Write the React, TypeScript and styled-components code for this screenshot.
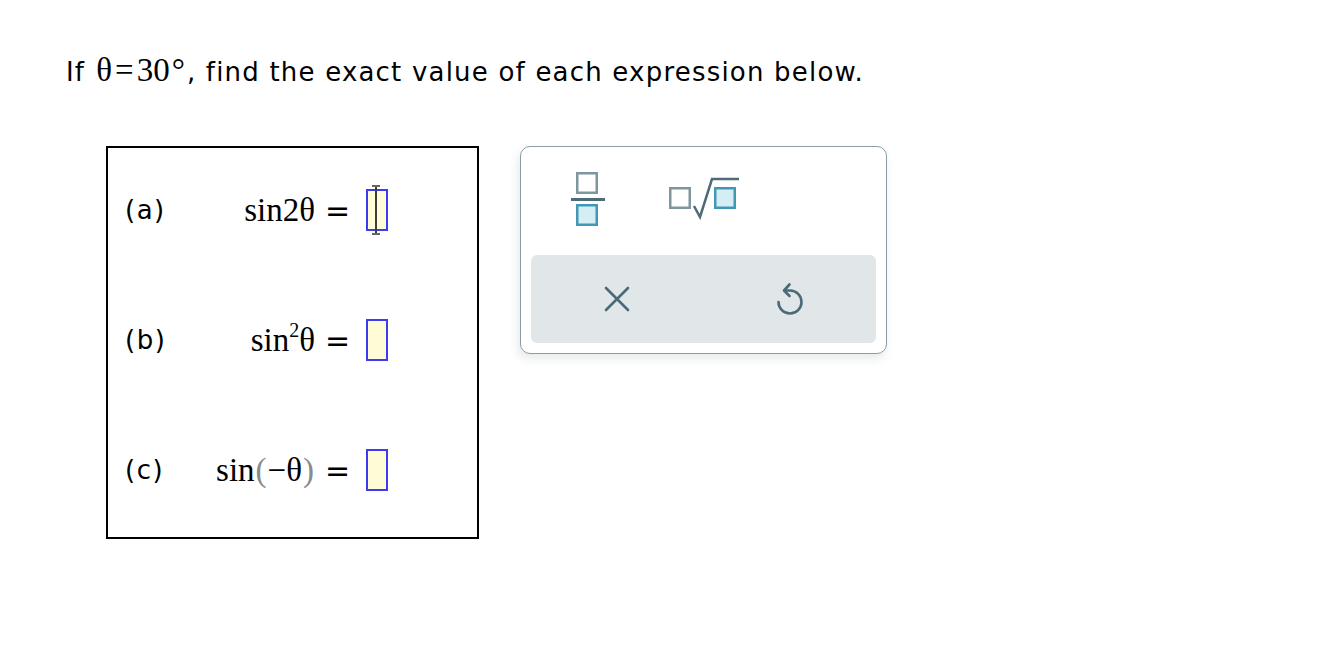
import React from "react";
import styled, { createGlobalStyle } from "styled-components";

const Global = createGlobalStyle`
  html, body { margin: 0; padding: 0; background: #fff; }
  body { font-family: "DejaVu Sans", Verdana, sans-serif; color: #000; }
`;

const Page = styled.div`
  padding: 54px 0 0 66px;
`;

const Title = styled.div`
  font-size: 26px;
  line-height: 36px;
  letter-spacing: 1.2px;
  white-space: nowrap;
`;

const MathInline = styled.span`
  font-family: "Liberation Serif", "Times New Roman", serif;
  font-size: 33px;
  line-height: 1;
  letter-spacing: 0;
  margin: 0 2px 0 11px;
`;

const Op = styled.span`
  margin: 0 3px;
`;

const Degree = styled.span`
  margin-left: 2px;
`;

const Work = styled.div`
  display: flex;
  align-items: flex-start;
  gap: 41px;
  margin: 56px 0 0 40px;
`;

const QuestionBox = styled.div`
  width: 369px;
  height: 389px;
  border: 2px solid #000;
  display: grid;
  grid-template-rows: repeat(3, 130px);
`;

const Row = styled.div`
  display: flex;
  align-items: center;
  padding-bottom: 6px;
`;

const Label = styled.div`
  font-size: 26px;
  width: 80px;
  padding-left: 17px;
  letter-spacing: 1.5px;
`;

const Expr = styled.div`
  font-family: "Liberation Serif", "Times New Roman", serif;
  font-size: 33px;
  width: 110px;
  text-align: right;
  white-space: nowrap;
`;

const Sup = styled.sup`
  font-size: 20px;
  vertical-align: 14px;
  line-height: 0;
`;

const Paren = styled.span`
  color: #8a8a8a;
  margin: 0 1px;
  font-weight: 300;
`;

const Eq = styled.div`
  font-family: "DejaVu Sans", sans-serif;
  font-size: 30px;
  margin: 0 16px 0 10px;
`;

const Blank = styled.div`
  position: relative;
  box-sizing: border-box;
  width: 22px;
  height: 42px;
  border: 2px solid #3b3bf0;
  background: #fffbd6;
`;

const Cursor = styled.div`
  position: absolute;
  left: 7px;
  top: -6px;
  width: 2px;
  height: 50px;
  background: #3d3d3d;
  &::before, &::after {
    content: "";
    position: absolute;
    left: -3px;
    width: 8px;
    height: 2px;
    background: #666;
  }
  &::before { top: 0; }
  &::after { bottom: 0; }
`;

const Panel = styled.div`
  width: 345px;
  border: 1.5px solid #8a9da7;
  border-radius: 10px;
  padding: 10px;
  background: #fff;
  box-shadow: -2px 5px 10px rgba(60, 80, 90, 0.12);
`;

const TopRow = styled.div`
  display: grid;
  grid-template-columns: repeat(3, 1fr);
  height: 98px;
`;

const ToolButton = styled.div<{ $pad: number; $shift: number }>`
  display: flex;
  justify-content: center;
  align-items: flex-start;
  padding-top: ${(p) => p.$pad}px;
  margin-left: ${(p) => p.$shift}px;
`;

const ActionRow = styled.div`
  display: grid;
  grid-template-columns: 1fr 1fr;
  height: 88px;
  background: #e1e6e9;
  border-radius: 6px;
`;

const ActionButton = styled.div`
  display: flex;
  justify-content: center;
  align-items: center;
`;

const FractionIcon = () => (
  <svg width="36" height="56" viewBox="0 0 36 56">
    <rect x="7.25" y="2.25" width="19.5" height="19.5" fill="#fff" stroke="#7f969f" strokeWidth="2.5" />
    <line x1="1" y1="28.5" x2="35" y2="28.5" stroke="#4f6b78" strokeWidth="3" />
    <rect x="7.25" y="34.25" width="19.5" height="19.5" fill="#d5eef4" stroke="#3f98b6" strokeWidth="2.5" />
  </svg>
);

const SqrtIcon = () => (
  <svg width="72" height="44" viewBox="0 0 72 44">
    <rect x="2.25" y="12.25" width="19.5" height="19.5" fill="#fff" stroke="#7f969f" strokeWidth="2.5" />
    <polyline points="26,30 32,41 44,3 71,3" fill="none" stroke="#4f6b78" strokeWidth="2.5" strokeLinejoin="miter" />
    <rect x="47.25" y="12.25" width="19.5" height="19.5" fill="#d5eef4" stroke="#3f98b6" strokeWidth="2.5" />
  </svg>
);

const CloseIcon = () => (
  <svg width="26" height="26" viewBox="0 0 26 26">
    <path d="M2 2 L24 24 M24 2 L2 24" stroke="#4b6a78" strokeWidth="2.6" strokeLinecap="round" />
  </svg>
);

const UndoIcon = () => (
  <svg width="30" height="36" viewBox="0 0 30 36">
    <path
      d="M3.5 21 A11.5 11.5 0 1 0 15 9.5 L10 9.5 M14.5 3.5 L9 9.5 L14.5 15"
      fill="none"
      stroke="#4b6a78"
      strokeWidth="2.6"
      strokeLinecap="round"
      strokeLinejoin="round"
    />
  </svg>
);

export default function App() {
  return (
    <>
      <Global />
      <Page>
        <Title>
          If
          <MathInline>
            θ<Op>=</Op>30<Degree>°</Degree>
          </MathInline>
          , find the exact value of each expression below.
        </Title>
        <Work>
          <QuestionBox>
            <Row>
              <Label>(a)</Label>
              <Expr>sin2θ</Expr>
              <Eq>=</Eq>
              <Blank>
                <Cursor />
              </Blank>
            </Row>
            <Row>
              <Label>(b)</Label>
              <Expr>
                sin<Sup>2</Sup>θ
              </Expr>
              <Eq>=</Eq>
              <Blank />
            </Row>
            <Row>
              <Label>(c)</Label>
              <Expr>
                sin<Paren>(</Paren>−θ<Paren>)</Paren>
              </Expr>
              <Eq>=</Eq>
              <Blank />
            </Row>
          </QuestionBox>
          <Panel>
            <TopRow>
              <ToolButton $pad={14} $shift={-2}>
                <FractionIcon />
              </ToolButton>
              <ToolButton $pad={19} $shift={0}>
                <SqrtIcon />
              </ToolButton>
              <ToolButton $pad={0} $shift={0} />
            </TopRow>
            <ActionRow>
              <ActionButton>
                <CloseIcon />
              </ActionButton>
              <ActionButton>
                <UndoIcon />
              </ActionButton>
            </ActionRow>
          </Panel>
        </Work>
      </Page>
    </>
  );
}
